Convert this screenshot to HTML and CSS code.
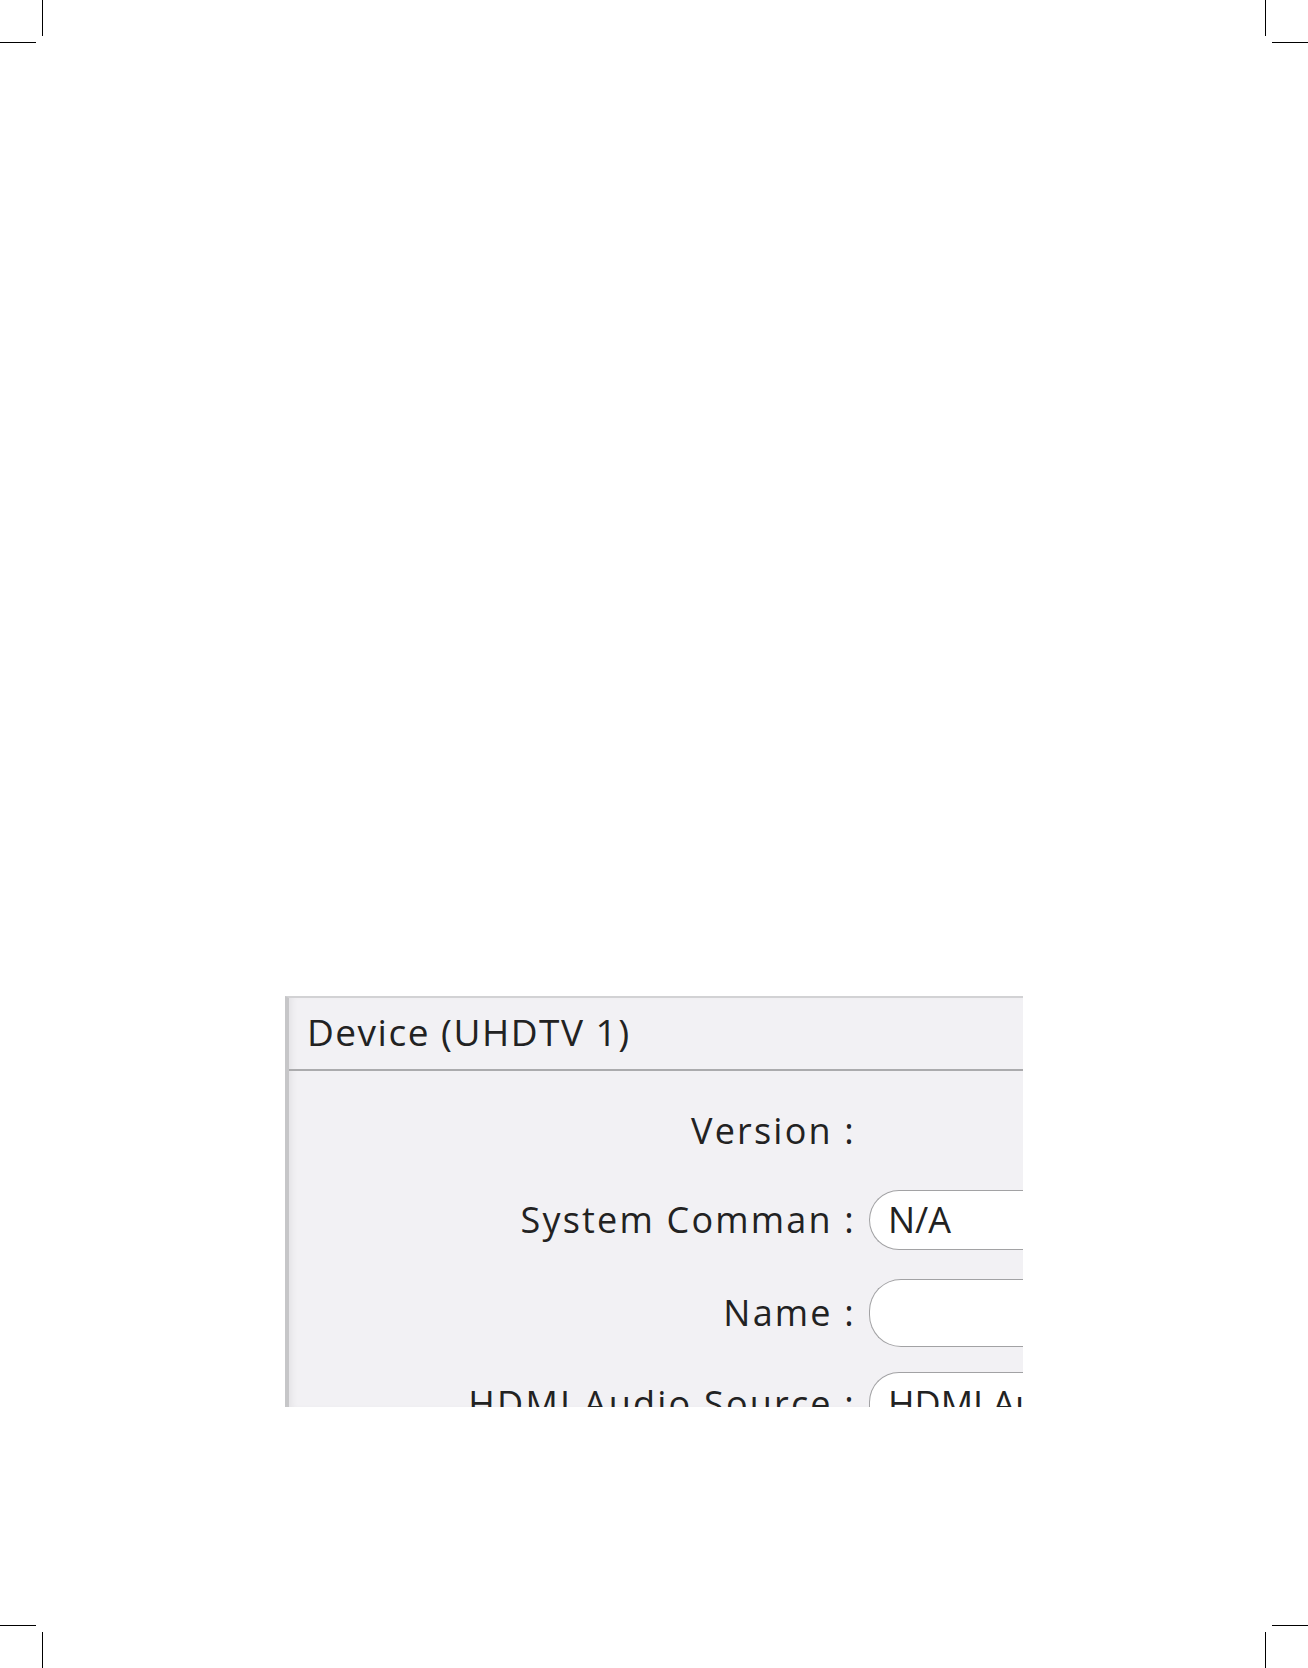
FILE: index.html
```html
<html>
    <head>
        <title>Device (UHDTV 1)</title>
        <link rel="stylesheet" href="styles.css">
    </head>
    <body>
        <!-- print crop marks -->
        <span class="mark mark-tl-v"></span>
        <span class="mark mark-tl-h"></span>
        <span class="mark mark-tr-v"></span>
        <span class="mark mark-tr-h"></span>
        <span class="mark mark-bl-h"></span>
        <span class="mark mark-bl-v"></span>
        <span class="mark mark-br-h"></span>
        <span class="mark mark-br-v"></span>

        <div class="panel">
            <div class="panel-head">Device (UHDTV 1)</div>
            <div class="panel-body">
                <div class="lbl">Version :</div>
                <div class="val"></div>

                <div class="lbl">System Comman :</div>
                <div class="field">N/A</div>

                <div class="lbl">Name :</div>
                <div class="field field-tall"></div>

                <div class="lbl row-last">HDMI Audio Source :</div>
                <div class="field row-last">HDMI Audio</div>
            </div>
        </div>
    </body>
</html>
```

FILE: styles.css
```css
* {
    box-sizing: border-box;
}
body {
    margin: 0;
    width: 1308px;
    height: 1668px;
    position: relative;
    background: #ffffff;
    overflow: hidden;
}

/*crop marks*/
.mark {
    position: absolute;
    background: #000000;
}
.mark-tl-v, .mark-tr-v { top: 0; width: 1px; height: 36px; }
.mark-bl-v, .mark-br-v { bottom: 0; width: 1px; height: 36px; }
.mark-tl-h, .mark-bl-h { left: 0; width: 36px; height: 1px; }
.mark-tr-h, .mark-br-h { right: 0; width: 36px; height: 1px; }
.mark-tl-v, .mark-bl-v { left: 42px; }
.mark-tr-v, .mark-br-v { left: 1265px; }
.mark-tl-h, .mark-tr-h { top: 42px; }
.mark-bl-h, .mark-br-h { top: 1625px; }

/*panel*/
.panel {
    margin: 996px 0 0 285px;
    width: 738px;
    height: 411px;
    overflow: hidden;
    background: #f2f1f4;
    border-top: 2px solid #d2d2d4;
    border-left: 4px solid #c6c6c8;
    box-shadow: inset 6px 0 6px -3px rgba(0, 0, 0, 0.06);
    color: #222222;
}
.panel-head {
    height: 73px;
    display: flex;
    align-items: center;
    padding-left: 18px;
    padding-bottom: 4px;
    border-bottom: 2px solid #ababad;
    font-family: "Open Sans", sans-serif;
    font-size: 37px;
    letter-spacing: 1.5px;
}
.panel-body {
    display: grid;
    grid-template-columns: 567px 1fr;
    grid-template-rows: 60px 60px 68px 60px;
    column-gap: 13px;
    row-gap: 29px;
    padding-top: 30px;
    font-family: "Open Sans", sans-serif;
    font-size: 36px;
    letter-spacing: 2.2px;
}
.lbl {
    text-align: right;
    align-self: center;
    white-space: nowrap;
    padding-bottom: 2px;
}
.field {
    background: #ffffff;
    border: 1.5px solid #a2a2a4;
    border-right: none;
    border-radius: 30px 0 0 30px;
    padding-left: 18px;
    padding-bottom: 2px;
    display: flex;
    align-items: center;
    white-space: nowrap;
    letter-spacing: 0;
}
.field-tall {
    border-radius: 32px 0 0 32px;
}
.row-last {
    margin-top: -4px;
}
```
